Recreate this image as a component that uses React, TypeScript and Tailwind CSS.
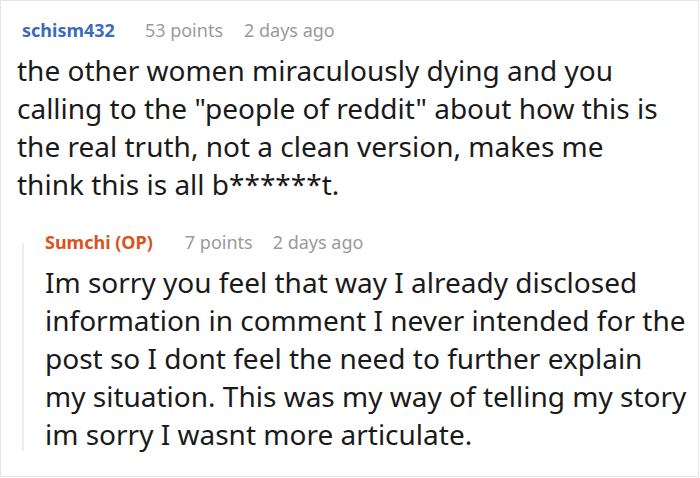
export default function App() {
  return (
    <div className="w-[700px] h-[478px] bg-white" style={{ fontFamily: '"Noto Sans", sans-serif' }}>
      <div className="w-[699px] h-[477px] border border-[#e5e5e5] pl-[16px] pt-[16px]">
        <div className="flex items-baseline text-[18px] leading-[26px] pl-[5px]">
          <span className="font-bold text-[#3a6bbd]">schism432</span>
          <span className="ml-[30px] text-[#9a9a9a]">53 points</span>
          <span className="ml-[21px] text-[#9a9a9a]">2 days ago</span>
        </div>
        <div className="text-[28px] leading-[38px] text-[#1a1a1a] w-[680px] mt-[8px]">
          the other women miraculously dying and you<br />
          calling to the "people of reddit" about how this is<br />
          the real truth, not a clean version, makes me<br />
          think this is all b******t.
        </div>
        <div className="flex mt-[26px] ml-[5px]">
          <div className="w-[2px] bg-[#ececec] mt-[14px] mb-[2px] shrink-0" />
          <div className="pl-[21px]">
            <div className="flex items-baseline text-[18px] leading-[26px]">
              <span className="font-bold text-[#d9531e]">Sumchi (OP)</span>
              <span className="ml-[32px] text-[#9a9a9a]">7 points</span>
              <span className="ml-[20px] text-[#9a9a9a]">2 days ago</span>
            </div>
            <div className="text-[28px] leading-[38px] text-[#1a1a1a] mt-[8px]">
              Im sorry you feel that way I already disclosed<br />
              information in comment I never intended for the<br />
              post so I dont feel the need to further explain<br />
              my situation. This was my way of telling my story<br />
              im sorry I wasnt more articulate.
            </div>
          </div>
        </div>
      </div>
    </div>
  );
}
